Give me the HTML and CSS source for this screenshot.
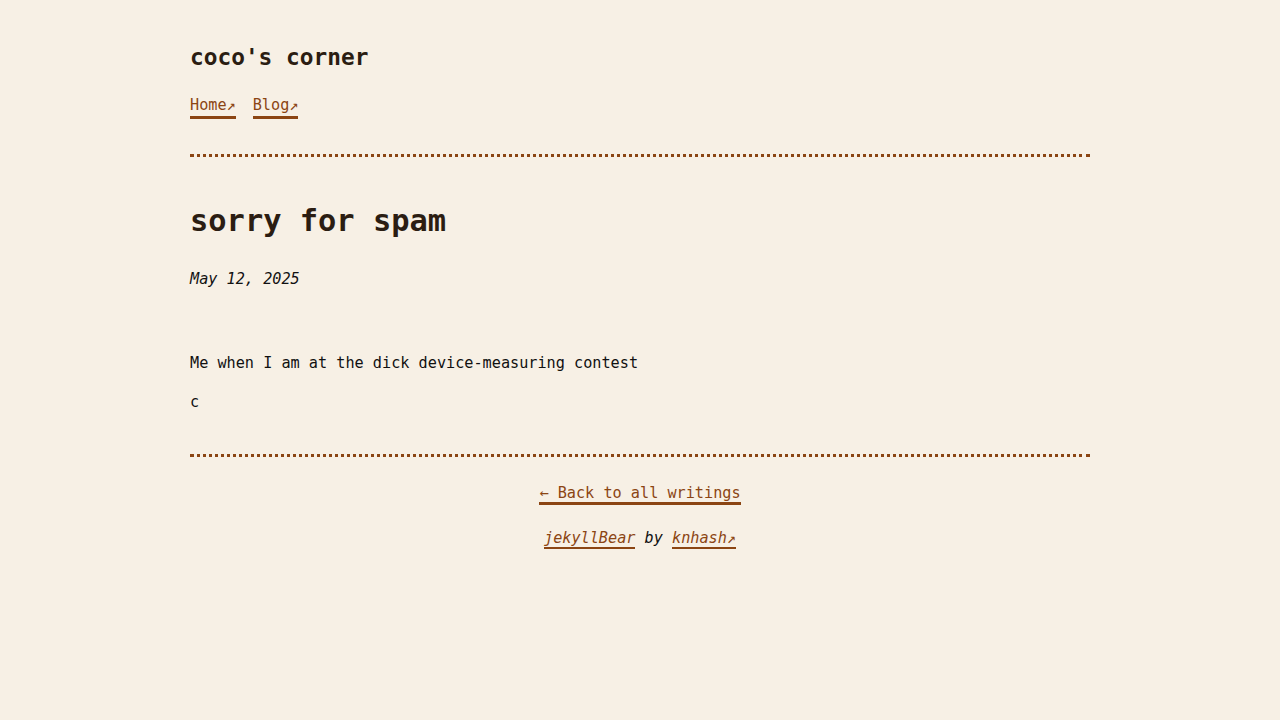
FILE: index.html
```html
<!DOCTYPE html>
<html lang="en">
<head>
<meta charset="utf-8">
<title>sorry for spam | coco's corner</title>
<link rel="stylesheet" href="styles.css">
</head>
<body>
<div class="page">
  <header class="site-header">
    <a class="site-title" href="#">coco's corner</a>
    <nav class="site-nav">
      <a class="nav-link" href="#">Home↗</a>
      <a class="nav-link" href="#">Blog↗</a>
    </nav>
  </header>
  <hr class="divider divider-top">
  <main class="post">
    <h1 class="post-title">sorry for spam</h1>
    <p class="post-date"><i>May 12, 2025</i></p>
    <p class="post-text first">Me when I am at the dick device-measuring contest</p>
    <p class="post-text">c</p>
  </main>
  <hr class="divider divider-bottom">
  <footer class="site-footer">
    <p class="back"><a class="link" href="#">← Back to all writings</a></p>
    <p class="credit"><a class="link" href="#">jekyllBear</a> by <a class="link" href="#">knhash↗</a></p>
  </footer>
</div>
</body>
</html>
```
FILE: styles.css
```css
html, body {
  margin: 0;
  padding: 0;
  background: #f7f0e5;
}
body {
  font-family: "DejaVu Sans Mono", "Liberation Mono", monospace;
  font-size: 15.2px;
  color: #111;
}
.page {
  width: 900px;
  margin: 0 auto;
  padding-top: 42px;
}
.site-title {
  display: block;
  font-size: 22.8px;
  line-height: 30px;
  font-weight: bold;
  color: #2b1d12;
  text-decoration: none;
}
.site-nav {
  margin-top: 22px;
  line-height: 22px;
  display: flex;
  gap: 17px;
}
.nav-link, .link {
  color: #8b4513;
  text-decoration: none;
  border-bottom: 3px solid #8b4513;
}
.divider {
  border: 0;
  border-top: 3px dotted #8b4513;
  height: 0;
  margin: 0;
}
.divider-top { margin-top: 35px; }
.post-title {
  margin: 44px 0 0;
  font-size: 30.4px;
  line-height: 40px;
  font-weight: bold;
  color: #2b1d12;
}
.post-date {
  margin: 27px 0 0;
  line-height: 22px;
}
.post-text {
  margin: 17px 0 0;
  line-height: 22px;
}
.post-text.first { margin-top: 62px; }
.divider-bottom { margin-top: 41px; }
.site-footer {
  text-align: center;
}
.back {
  margin: 25px 0 0;
  line-height: 22px;
}
.credit {
  margin: 23px 0 0;
  line-height: 22px;
  font-style: italic;
}
```
